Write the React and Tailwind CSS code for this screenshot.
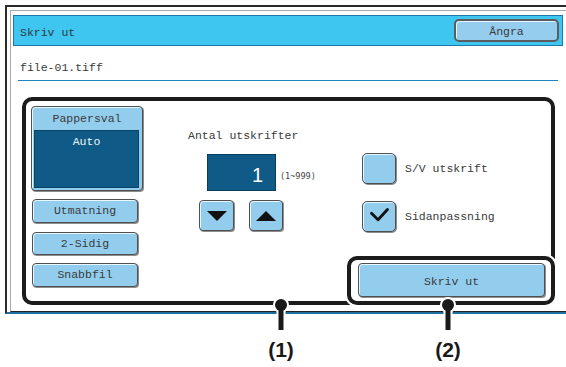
import React from "react";

const btn =
  "bg-[#93cdee] border border-[#505050] rounded-[4px] shadow-[1px_1px_0_#8c8c8c,inset_1px_1px_0_#e8f6ff] text-[#3a3a3a] text-[11.5px] leading-[14px] flex items-center justify-center";

function Pin({ left }) {
  return (
    <svg
      className="absolute top-[290px]"
      style={{ left }}
      width="26"
      height="45"
      viewBox="0 0 26 45"
    >
      <circle cx="13" cy="15" r="8" fill="#fff" />
      <rect x="8.5" y="15" width="9" height="24" fill="#fff" />
      <circle cx="13" cy="15" r="6" fill="#1a1a1a" />
      <rect x="10.5" y="15" width="5" height="25" fill="#1a1a1a" />
    </svg>
  );
}

export default function App() {
  return (
    <div className="w-[566px] h-[367px] bg-white relative overflow-hidden font-['Liberation_Mono',monospace] text-[#3a3a3a]">
      {/* panel frame */}
      <div className="ml-[5px] mt-[5px] w-[600px] h-[309px] border-t-2 border-l-2 border-[#2a2a2a] border-b-2 border-b-[#1f6e9e]">
        <div className="ml-[3px] mt-[3px] h-[302px] border-l border-t border-[#a8a8a8] border-b border-b-[#222]">
          {/* header */}
          <div className="ml-[2px] mt-[4px] w-[550px] h-[31px] bg-[#3ec5f0] border border-[#1f78a8] flex items-center justify-between">
            <span className="ml-[6px] mt-[4px] text-[11.5px] leading-[14px] text-[#2d3b44]">Skriv ut</span>
            <div className="mr-[3px] w-[105px] h-[23px] bg-[#95cdef] border-2 border-[#5c5c5c] rounded-[5px] shadow-[inset_1px_1px_0_#e6f5ff] flex items-center justify-center">
              <span className="mt-[3px] text-[11.5px] leading-[14px] text-[#3a3a3a]">Ångra</span>
            </div>
          </div>

          {/* file name */}
          <div className="ml-[9px] mt-[15px] text-[11.5px] leading-[14px] text-[#3a3a3a]">file-01.tiff</div>
          <div className="ml-[7px] mt-[5px] w-[540px] h-px bg-[#1e86c0]" />

          {/* main box (1) */}
          <div className="ml-[11px] mt-[16px] w-[533px] h-[208px] border-4 border-[#1c1c1c] rounded-[10px] flex pl-[5px] pt-[5px]">
            {/* left column */}
            <div className="w-[112px] flex flex-col">
              <div className="h-[85px] bg-[#93cdee] border border-[#505050] rounded-[4px] shadow-[1px_1px_0_#8c8c8c,inset_1px_1px_0_#e8f6ff] flex flex-col">
                <div className="h-[23px] flex items-center justify-center text-[11.5px] leading-[14px] text-[#3a3a3a]">
                  Pappersval
                </div>
                <div className="ml-[2px] mr-[3px] h-[58px] bg-[#0f5a86] border border-[#0b4466] flex justify-center pt-[4px] text-[11.5px] leading-[14px] text-[#eef5fa]">
                  Auto
                </div>
              </div>
              <div className={`${btn} ml-[1px] w-[106px] h-[24px] mt-[8px]`}>Utmatning</div>
              <div className={`${btn} ml-[1px] w-[106px] h-[23px] mt-[9px]`}>2-Sidig</div>
              <div className={`${btn} ml-[1px] w-[106px] h-[24px] mt-[8px]`}>Snabbfil</div>
            </div>

            {/* middle column */}
            <div className="ml-[45px] w-[159px] flex flex-col">
              <div className="mt-[23px] text-[11.5px] leading-[14px] text-[#3a3a3a] whitespace-nowrap">Antal utskrifter</div>
              <div className="mt-[11px] ml-[19px] flex items-end">
                <div className="w-[69px] h-[37px] bg-[#0f5a86] border border-[#0a3d5c] flex justify-end pr-[12px] pt-[10px] font-['Liberation_Sans',sans-serif] text-[20px] leading-[20px] text-white">
                  1
                </div>
                <span className="ml-[4px] mb-[10px] font-['DejaVu_Sans_Mono',monospace] text-[8.5px] leading-[10px] text-[#444]">
                  (1~999)
                </span>
              </div>
              <div className="mt-[9px] ml-[11px] flex gap-[15px]">
                <div className={`${btn} w-[35px] h-[31px]`}>
                  <svg width="20" height="10" viewBox="0 0 20 10">
                    <polygon points="0,0 20,0 10,10" fill="#111" />
                  </svg>
                </div>
                <div className={`${btn} w-[34px] h-[31px]`}>
                  <svg width="20" height="10" viewBox="0 0 20 10">
                    <polygon points="0,10 20,10 10,0" fill="#111" />
                  </svg>
                </div>
              </div>
            </div>

            {/* right column */}
            <div className="flex-1 flex flex-col">
              <div className="mt-[47px] ml-[15px] flex items-center">
                <div className={`${btn} w-[34px] h-[31px] rounded-[5px]`} />
                <span className="ml-[9px] text-[11.5px] leading-[14px] text-[#3a3a3a]">S/V utskrift</span>
              </div>
              <div className="mt-[17px] ml-[15px] flex items-center">
                <div className={`${btn} w-[34px] h-[31px] rounded-[5px]`}>
                  <svg width="34" height="31" viewBox="0 0 34 31">
                    <polyline
                      points="9,12 16,19 26,8"
                      fill="none"
                      stroke="#111"
                      strokeWidth="3"
                      strokeLinecap="round"
                      strokeLinejoin="round"
                    />
                  </svg>
                </div>
                <span className="ml-[9px] text-[11.5px] leading-[14px] text-[#3a3a3a]">Sidanpassning</span>
              </div>
              {/* box (2) */}
              <div className="mt-auto -mr-[4px] -mb-[4px] h-[49px] bg-white border-4 border-[#1c1c1c] rounded-[10px] shadow-[0_0_0_2px_#fff] pt-[3px] pb-[4px] pl-[7px] pr-[6px]">
                <div className={`${btn} h-[34px] w-full`}>
                  <span className="mt-[3px]">Skriv ut</span>
                </div>
              </div>
            </div>
          </div>
        </div>
      </div>

      {/* callout pins */}
      <Pin left={268} />
      <Pin left={435} />

      {/* callout labels */}
      <div className="mt-[24px] flex font-['Liberation_Sans',sans-serif] font-bold text-[21px] leading-[24px] text-[#1a1a1a]">
        <span className="ml-[251px] w-[60px] text-center">(1)</span>
        <span className="ml-[107px] w-[60px] text-center">(2)</span>
      </div>
    </div>
  );
}
